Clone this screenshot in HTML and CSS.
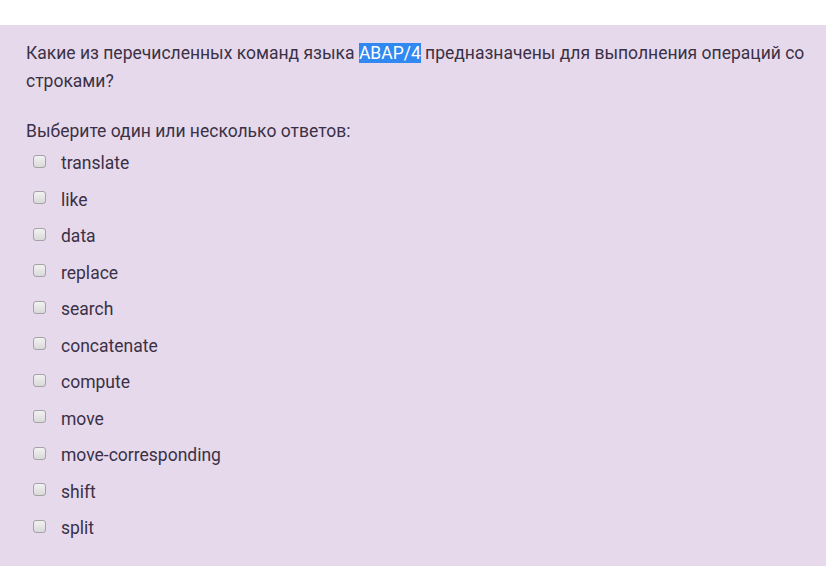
FILE: index.html
```html
<!DOCTYPE html>
<html lang="ru">
<head>
<meta charset="utf-8">
<link rel="stylesheet" href="styles.css">
</head>
<body>
<div class="top"></div>
<div class="que">
  <p class="qtext"><span>Какие из перечисленных команд языка </span><span class="sel">ABAP/4</span><span> предназначены для выполнения операций со</span> <span>строками?</span></p>
  <div class="prompt">Выберите один или несколько ответов:</div>
  <div class="answers">
    <label class="opt"><span class="cb"></span><span>translate</span></label>
    <label class="opt"><span class="cb"></span><span>like</span></label>
    <label class="opt"><span class="cb"></span><span>data</span></label>
    <label class="opt"><span class="cb"></span><span>replace</span></label>
    <label class="opt"><span class="cb"></span><span>search</span></label>
    <label class="opt"><span class="cb"></span><span>concatenate</span></label>
    <label class="opt"><span class="cb"></span><span>compute</span></label>
    <label class="opt"><span class="cb"></span><span>move</span></label>
    <label class="opt"><span class="cb"></span><span>move-corresponding</span></label>
    <label class="opt"><span class="cb"></span><span>shift</span></label>
    <label class="opt"><span class="cb"></span><span>split</span></label>
  </div>
</div>
</body>
</html>
```
FILE: styles.css
```css
html, body {
  margin: 0;
  padding: 0;
  background: #ffffff;
}
body {
  font-family: Roboto, "Liberation Sans", sans-serif;
  font-size: 17.5px;
  color: #3a3146;
}
.top {
  height: 25px;
}
.que {
  background: #e7d9ec;
  padding: 14px 12px 20px 26px;
  height: 507px;
}
.qtext {
  margin: 0 0 22px 0;
  line-height: 28px;
}
.sel {
  background: #3088f0;
  color: #ffffff;
}
.prompt {
  line-height: 28px;
}
.answers {
  display: flex;
  flex-direction: column;
  padding-left: 7px;
}
.opt {
  display: flex;
  align-items: center;
  height: 36.5px;
  gap: 15px;
}
.cb {
  width: 11px;
  height: 11px;
  border: 1px solid #a4a1a7;
  border-radius: 3px;
  background: linear-gradient(#f2f2f2, #d9d9d9);
  margin-top: -4px;
}
```
